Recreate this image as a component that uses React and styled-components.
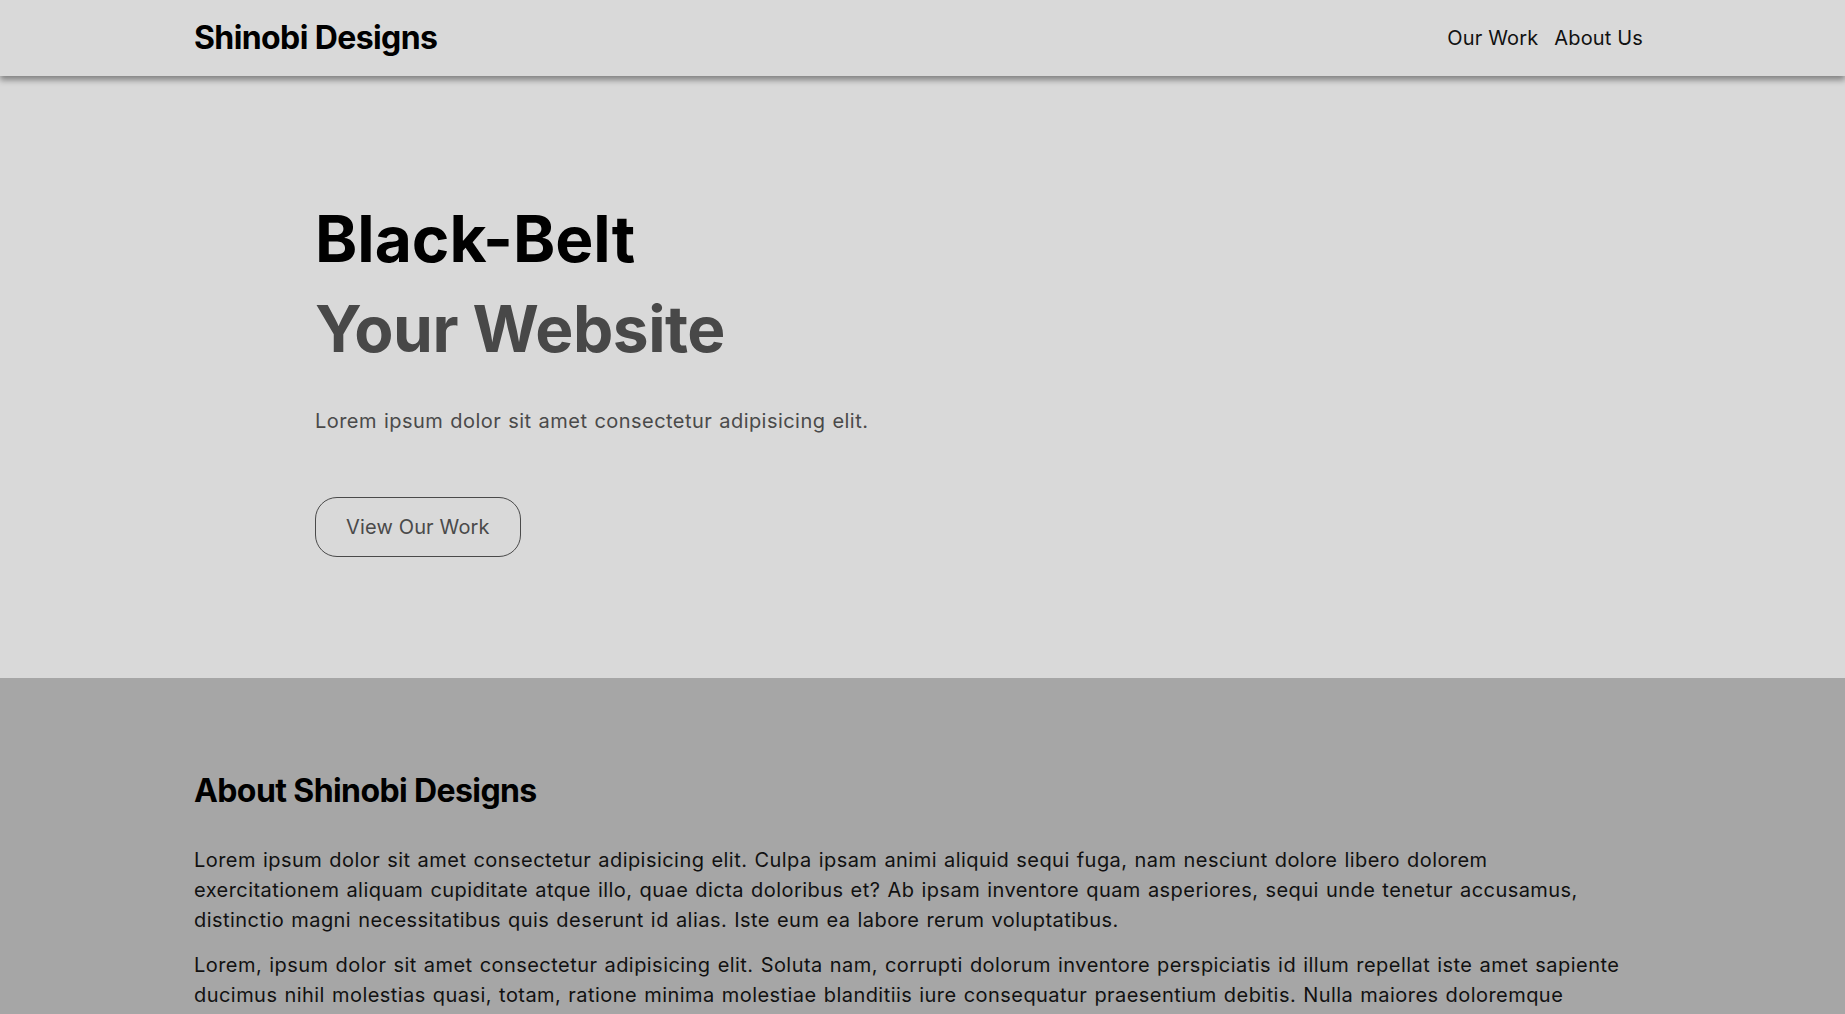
import React from "react";
import styled, { createGlobalStyle } from "styled-components";

const GlobalStyle = createGlobalStyle`
  *, *::before, *::after { box-sizing: border-box; }
  html, body { margin: 0; padding: 0; }
  body {
    font-family: Inter, "Noto Sans", "Liberation Sans", sans-serif;
    background: #d9d9d9;
    color: #111;
    -webkit-font-smoothing: antialiased;
  }
  a { color: inherit; text-decoration: none; }
`;

const Container = styled.div`
  width: 1457px;
  max-width: 79%;
  margin: 0 auto;
`;

const Header = styled.header`
  position: relative;
  z-index: 1;
  height: 76px;
  background: #d9d9d9;
  box-shadow: 0 4px 6px rgba(0, 0, 0, 0.4);
`;

const HeaderInner = styled(Container)`
  height: 100%;
  display: flex;
  align-items: center;
  justify-content: space-between;
`;

const Logo = styled.a`
  font-size: 32px;
  font-weight: 700;
  letter-spacing: -0.6px;
  line-height: 1;
  color: #000;
  padding-bottom: 1px;
`;

const Nav = styled.nav`
  display: flex;
  align-items: center;
`;

const NavLink = styled.a`
  font-size: 20px;
  line-height: 28px;
  font-weight: 400;
  color: #111;
  padding: 0 8px;
  letter-spacing: 0.15px;
`;

const Hero = styled.section`
  background: #d9d9d9;
  padding: 118px 0 121px;
`;

const HeroInner = styled(Container)`
  padding-left: 121px;
`;

const Title = styled.h1`
  margin: 0;
  font-size: 64px;
  line-height: 90px;
  font-weight: 700;
`;

const TitleLine = styled.span`
  display: block;
  color: ${(p) => (p.$muted ? "#484848" : "#000")};
  letter-spacing: ${(p) => (p.$muted ? "-0.5px" : "0")};
`;

const Lead = styled.p`
  margin: 33px 0 0;
  font-size: 20px;
  line-height: 28px;
  color: #4a4a4a;
  letter-spacing: 0.45px;
  word-spacing: 1px;
`;

const OutlineButton = styled.a`
  display: inline-block;
  margin-top: 62px;
  padding: 15px 30px;
  font-size: 20px;
  line-height: 28px;
  color: #4a4a4a;
  border: 1px solid #4a4a4a;
  border-radius: 22px;
  letter-spacing: 0.15px;
`;

const About = styled.section`
  background: #a6a6a6;
  padding: 90px 0 80px;
`;

const SectionTitle = styled.h2`
  margin: 0;
  font-size: 32px;
  line-height: 45px;
  font-weight: 700;
  letter-spacing: -0.6px;
  color: #000;
`;

const Body = styled.div`
  margin-top: 32px;
  max-width: 1430px;
  display: flex;
  flex-direction: column;
  gap: 15px;
`;

const Para = styled.p`
  margin: 0;
  font-size: 20px;
  line-height: 30px;
  color: #111;
  letter-spacing: 0.45px;
  word-spacing: 1px;
`;

export default function App() {
  return (
    <>
      <GlobalStyle />
      <Header>
        <HeaderInner>
          <Logo href="#">Shinobi Designs</Logo>
          <Nav>
            <NavLink href="#work">Our Work</NavLink>
            <NavLink href="#about">About Us</NavLink>
          </Nav>
        </HeaderInner>
      </Header>
      <Hero>
        <HeroInner>
          <Title>
            <TitleLine>Black-Belt</TitleLine>
            <TitleLine $muted>Your Website</TitleLine>
          </Title>
          <Lead>Lorem ipsum dolor sit amet consectetur adipisicing elit.</Lead>
          <OutlineButton href="#work">View Our Work</OutlineButton>
        </HeroInner>
      </Hero>
      <About id="about">
        <Container>
          <SectionTitle>About Shinobi Designs</SectionTitle>
          <Body>
            <Para>
              Lorem ipsum dolor sit amet consectetur adipisicing elit. Culpa ipsam animi aliquid sequi fuga, nam
              nesciunt dolore libero dolorem exercitationem aliquam cupiditate atque illo, quae dicta doloribus et? Ab
              ipsam inventore quam asperiores, sequi unde tenetur accusamus, distinctio magni necessitatibus quis
              deserunt id alias. Iste eum ea labore rerum voluptatibus.
            </Para>
            <Para>
              Lorem, ipsum dolor sit amet consectetur adipisicing elit. Soluta nam, corrupti dolorum inventore
              perspiciatis id illum repellat iste amet sapiente ducimus nihil molestias quasi, totam, ratione minima
              molestiae blanditiis iure consequatur praesentium debitis. Nulla maiores doloremque voluptatibus
              accusantium, quibusdam eveniet temporibus nesciunt.
            </Para>
          </Body>
        </Container>
      </About>
    </>
  );
}
